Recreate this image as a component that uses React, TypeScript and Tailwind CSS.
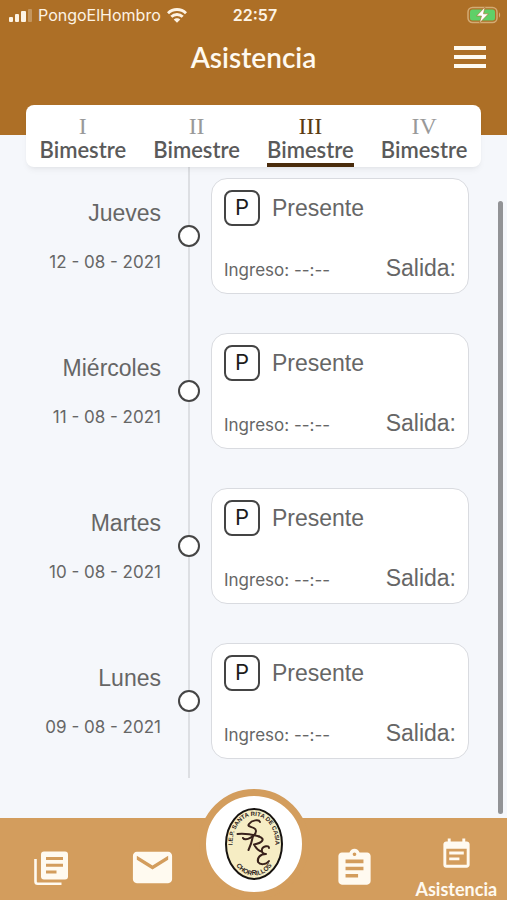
import { useState } from "react";
import { MdAssignment, MdEmail, MdEventNote } from "react-icons/md";

const terms = ["I", "II", "III", "IV"];

const days = [
  { name: "Jueves", date: "12 - 08 - 2021" },
  { name: "Miércoles", date: "11 - 08 - 2021" },
  { name: "Martes", date: "10 - 08 - 2021" },
  { name: "Lunes", date: "09 - 08 - 2021" },
];

function StatusBar() {
  return (
    <div className="grid h-[30px] grid-cols-[1fr_auto_1fr] items-center pr-[6px] pl-[9px] font-['Inter',sans-serif] text-[#fdf3e4]">
      <div className="flex items-center gap-[6px]">
        <svg width="23" height="13" viewBox="0 0 23 13" fill="currentColor" aria-hidden="true">
          <rect x="0" y="8" width="4" height="5" rx="1" />
          <rect x="6" y="5" width="4" height="8" rx="1" />
          <rect x="12" y="2" width="5" height="11" rx="1" />
          <rect x="19" y="0" width="4" height="13" rx="1" opacity="0.3" />
        </svg>
        <span className="text-base">PongoElHombro</span>
        <svg width="20" height="15" viewBox="0 0 20 15" fill="none" stroke="currentColor" strokeWidth="2.9" aria-hidden="true">
          <path d="M1 5.200C6 .2 14 .2 19 5.200" />
          <path d="M4.300 8.800C7.500 5.700 12.500 5.700 15.700 8.800" />
          <path d="M10 14.800L6.700 11.500C8.500 9.700 11.500 9.700 13.300 11.500Z" fill="currentColor" stroke="none" />
        </svg>
      </div>
      <span className="text-base font-semibold">22:57</span>
      <svg className="justify-self-end" width="34" height="18" viewBox="0 0 34 18" aria-hidden="true">
        <rect x="1" y="1.500" width="29" height="15" rx="4.500" fill="none" stroke="#d3ab74" strokeWidth="1.500" />
        <rect x="3" y="3.500" width="25" height="11" rx="2.500" fill="#5fd068" />
        <path d="M32 6.500v5c1.500-.5 1.500-4.500 0-5z" fill="#d3ab74" />
        <path d="M18 1L9.500 10H14.500L12.500 17L21.500 7.800H16.500Z" fill="#fff" stroke="#ad6f26" strokeWidth="0.600" />
      </svg>
    </div>
  );
}

function PagesIcon() {
  return (
    <svg width="34" height="34" viewBox="0 0 34 34" fill="none" aria-hidden="true">
      <rect x="7" y="0.500" width="27" height="28" rx="3" fill="currentColor" />
      <path d="M1.500 8V30.500Q1.500 32.700 3.700 32.700H27.500" stroke="currentColor" strokeWidth="2.600" />
      <path d="M12 7.500H29M12 14.300H29M12 21H22.500" stroke="#d39d5d" strokeWidth="2.900" />
    </svg>
  );
}

function Crest() {
  return (
    <svg width="58" height="72" viewBox="0 0 58 72" role="img" aria-label="I.E.P. Santa Rita de Casia, Chorrillos">
      <defs>
        <path id="crest-top" d="M7.500 37C7.500 -2 50.500 -2 50.500 37" />
        <path id="crest-bottom" d="M9 54C18 72 40 72 49 54" />
      </defs>
      <ellipse cx="29" cy="36" rx="28" ry="35" fill="#f6edc4" stroke="#171310" strokeWidth="2" />
      <g fontFamily="Liberation Sans, sans-serif" fontWeight="700" fill="#2b211b" textAnchor="middle">
        <text fontSize="6">
          <textPath href="#crest-top" startOffset="50%">I.E.P. SANTA RITA DE CASIA</textPath>
        </text>
        <text fontSize="6.500">
          <textPath href="#crest-bottom" startOffset="50%">CHORRILLOS</textPath>
        </text>
      </g>
      <g fill="none" stroke="#38211b" strokeWidth="2" strokeLinecap="round" strokeLinejoin="round">
        <path d="M35 14C34 11 27 12 24 16C21 20 31 18 31 23C31 28 20 34 18 30" />
        <path d="M12.500 26C20 25.500 28 26.500 34 28.500" />
        <path d="M28 28C27 33 26 37 23.500 42M34 28.500C41 31 37 35 29 36.500C31 40 33 43 37 43.500" />
        <path d="M44 40C44 37 38 38 37 41C36 44 38 46 41 46C35 46 32 50 33 54C35 57 41 57 44 53" />
      </g>
    </svg>
  );
}

function DayRow({ name, date }: { name: string; date: string }) {
  return (
    <li className="grid h-[155px] grid-cols-[minmax(0,161fr)_50px_minmax(0,258fr)] items-center pr-[38px] text-[#666]">
      <div className="flex flex-col gap-[23px] pt-[2px] text-right">
        <h2 className="font-['Liberation_Sans',sans-serif] text-[23px] leading-7">{name}</h2>
        <p className="text-[17px] leading-6">{date}</p>
      </div>
      <div className="flex h-full flex-col items-center pr-[11px] pl-[17px]">
        <span className="w-[2px] flex-1 bg-[#dddfe3]" />
        <span className="size-[22px] rounded-full border-2 border-[#454545] bg-white" />
        <span className="w-[2px] flex-1 bg-[#dddfe3]" />
      </div>
      <article className="flex h-[116px] flex-col justify-between rounded-2xl border border-[#d9dbe0] bg-white px-3 py-[11px]">
        <div className="flex items-center gap-3">
          <span className="flex size-9 items-center justify-center rounded-lg border-2 border-[#444] text-[22px] text-[#1c1c1c]">P</span>
          <span className="font-['Liberation_Sans',sans-serif] text-[23px] leading-7">Presente</span>
        </div>
        <div className="flex items-baseline justify-between">
          <span className="text-[17px] leading-6">Ingreso: --:--</span>
          <span className="font-['Liberation_Sans',sans-serif] text-[23px] leading-7">Salida:</span>
        </div>
      </article>
    </li>
  );
}

export default function App() {
  const [active, setActive] = useState("III");

  return (
    <div className="flex min-h-screen flex-col bg-[#f5f7fb] font-['Inter',sans-serif]">
      <header className="h-[135px] bg-[#ad6f26]">
        <StatusBar />
        <div className="grid h-[53px] grid-cols-[1fr_auto_1fr] items-center px-[21px]">
          <span />
          <h1 className="font-['Lato',sans-serif] text-[28px] leading-8 font-semibold text-[#fffaf0]">Asistencia</h1>
          <button type="button" aria-label="Menú" className="flex flex-col gap-[5px] justify-self-end">
            <span className="h-1 w-8 bg-[#fffaf0]" />
            <span className="h-1 w-8 bg-[#fffaf0]" />
            <span className="h-1 w-8 bg-[#fffaf0]" />
          </button>
        </div>
      </header>

      <div className="relative z-10 mx-[26px] -mt-[30px] grid h-[62px] grid-cols-4 rounded-lg bg-white shadow-md shadow-black/5" role="tablist">
        {terms.map((term) => {
          const selected = term === active;
          return (
            <button key={term} type="button" role="tab" aria-selected={selected} onClick={() => setActive(term)} className="flex flex-col items-center">
              <span className={selected ? "flex h-full flex-col items-center border-b-4 border-[#4a2c0c] pt-[9px]" : "flex h-full flex-col items-center border-b-4 border-transparent pt-[9px]"}>
                <span className={selected ? "font-['Liberation_Serif',serif] text-2xl leading-6 text-[#5b3a12]" : "font-['Liberation_Serif',serif] text-2xl leading-6 text-[#999]"}>{term}</span>
                <span className="font-['Lato',sans-serif] text-[22px] leading-6 font-semibold text-[#5a5a5a]">Bimestre</span>
              </span>
            </button>
          );
        })}
      </div>

      <main className="relative -mt-[9px] flex-1 pb-10">
        <ul>
          {days.map((day) => (
            <DayRow key={day.date} name={day.name} date={day.date} />
          ))}
        </ul>
        <span className="absolute top-[43px] right-1 bottom-1 w-[5px] rounded-full bg-[#929396]" />
      </main>

      <nav className="relative z-10 grid h-[82px] grid-cols-5 bg-[#d39d5d] text-[#fffaf0]">
        <a href="#publicaciones" aria-label="Publicaciones" className="flex justify-center pt-[33px]">
          <PagesIcon />
        </a>
        <a href="#mensajes" aria-label="Mensajes" className="flex justify-center pt-[26px]">
          <MdEmail size={47} />
        </a>
        <a href="#inicio" aria-label="Inicio" className="-mt-[29px] flex size-[110px] items-center justify-center justify-self-center rounded-full border-[7px] border-[#d39d5d] bg-white">
          <Crest />
        </a>
        <a href="#tareas" aria-label="Tareas" className="flex justify-center pt-[29px]">
          <MdAssignment size={43} />
        </a>
        <a href="#asistencia" aria-current="page" className="flex flex-col items-center pt-[19px]">
          <MdEventNote size={35} />
          <span className="font-['Lato',sans-serif] text-lg leading-[34px] font-bold">Asistencia</span>
        </a>
      </nav>
    </div>
  );
}
